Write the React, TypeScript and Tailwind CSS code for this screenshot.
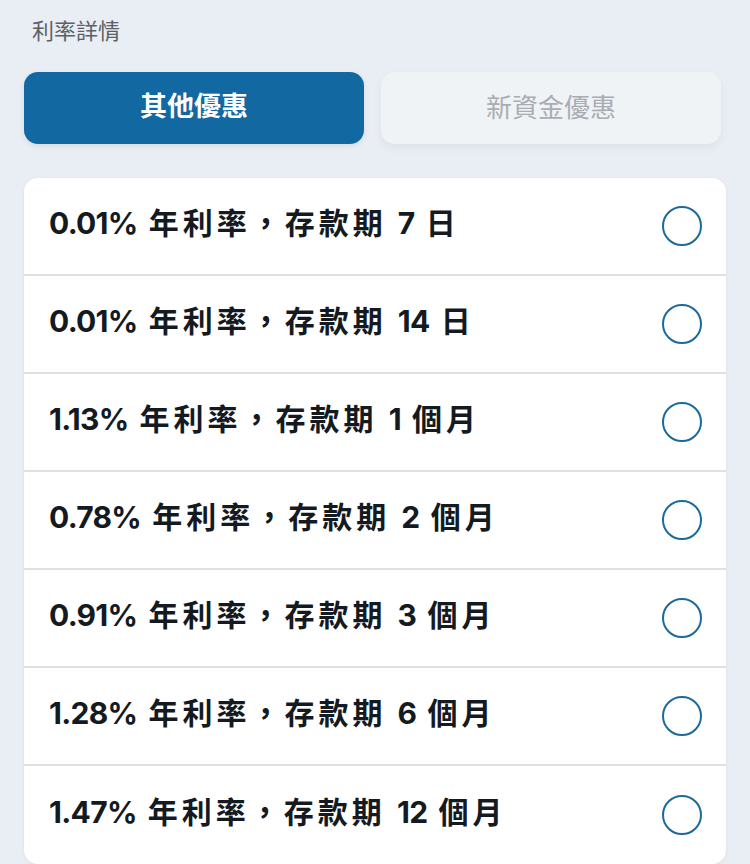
import React from "react";

const rows = [
  "0.01% 年利率，存款期 7 日",
  "0.01% 年利率，存款期 14 日",
  "1.13% 年利率，存款期 1 個月",
  "0.78% 年利率，存款期 2 個月",
  "0.91% 年利率，存款期 3 個月",
  "1.28% 年利率，存款期 6 個月",
  "1.47% 年利率，存款期 12 個月",
];

function split(s: string) {
  const out: { t: string; cjk: boolean }[] = [];
  for (const ch of s) {
    const cjk = ch.charCodeAt(0) > 0x2000 || ch === " ";
    const last = out[out.length - 1];
    if (last && last.cjk === cjk) last.t += ch;
    else out.push({ t: ch, cjk });
  }
  return out;
}

export default function App() {
  return (
    <div
      className="w-[750px] h-[864px] overflow-hidden bg-[#e9edf4]"
      style={{ fontFamily: "Inter, 'Noto Sans CJK TC', sans-serif" }}
    >
      <div
        className="pl-[32px] pt-[14px] h-[72px] text-[22px] leading-[30px] text-[#5c6066]"
        style={{ fontFamily: "'Noto Sans CJK TC', sans-serif" }}
      >
        利率詳情
      </div>
      <div className="flex gap-[17px] pl-[24px] pr-[29px]">
        <button
          className="flex-1 h-[72px] pb-[5px] rounded-[14px] bg-[#1268a1] text-white text-[27px] font-bold shadow-[0_2px_6px_rgba(0,0,0,0.08)]"
          style={{ fontFamily: "'Noto Sans CJK TC', sans-serif" }}
        >
          其他優惠
        </button>
        <button
          className="flex-1 h-[72px] pb-[5px] rounded-[14px] bg-[#f0f3f6] text-[#a9adb2] text-[26px] shadow-[0_4px_10px_rgba(0,0,0,0.05)]"
          style={{ fontFamily: "'Noto Sans CJK TC', sans-serif" }}
        >
          新資金優惠
        </button>
      </div>
      <div className="mt-[34px] ml-[24px] w-[702px] bg-white rounded-[14px] shadow-[0_1px_4px_rgba(0,0,0,0.06)]">
        {rows.map((r, i) => (
          <div
            key={i}
            className={`flex items-center justify-between h-[98px] pl-[25px] pr-[24px] ${
              i < rows.length - 1 ? "border-b-2 border-[#dfe0e4]" : ""
            }`}
          >
            <span className="text-[30px] font-bold text-[#141a1f] mb-[5px] whitespace-pre proportional-nums">
              {split(r).map((s, j) => (
                <span key={j} className={s.cjk ? "tracking-[4px]" : "tracking-[-0.7px]"}>
                  {s.t}
                </span>
              ))}
            </span>
            <span className="w-[40px] h-[40px] rounded-full border-2 border-[#1c6a9c]" />
          </div>
        ))}
      </div>
    </div>
  );
}
